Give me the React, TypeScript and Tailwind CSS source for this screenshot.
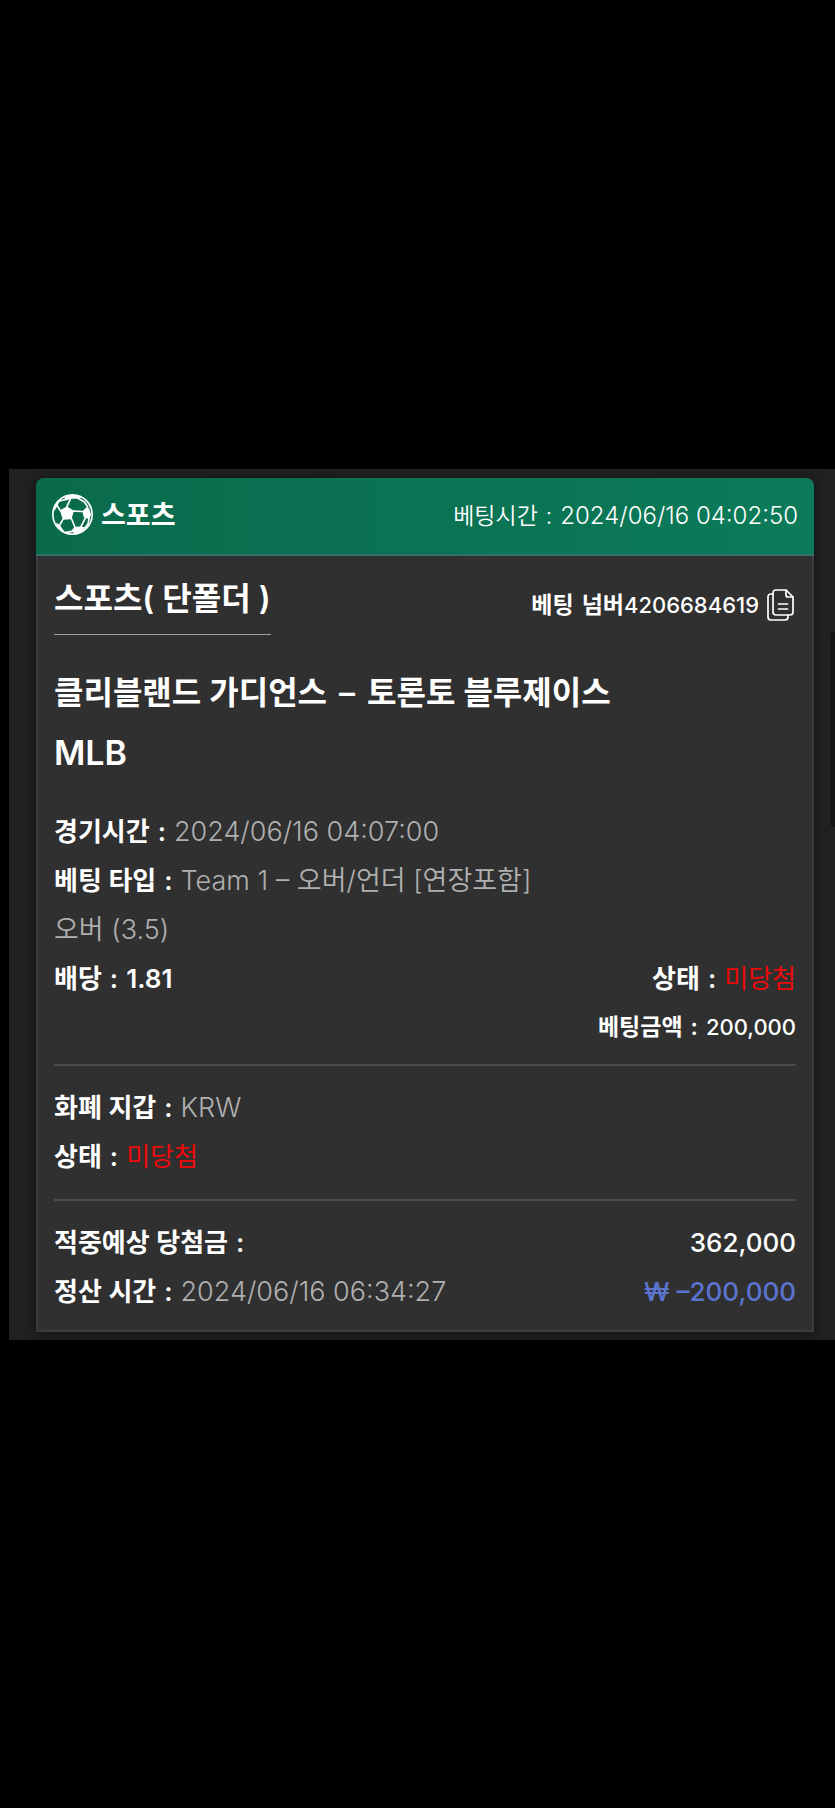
import React from "react";

const SoccerBall = () => (
  <svg viewBox="0 0 124 124" className="mb-1 w-[41px] h-[41px] shrink-0" fill="none" aria-hidden="true">
    <circle cx="62" cy="62" r="59.5" stroke="#fff" strokeWidth="5" />
    <g fill="#fff">
      <path d="M24 50 L45 37 L66 51 L59 76 L33 78 Z" />
      <path d="M36 9 Q62 -3 89 10 L80 14 L57 14 L42 20 Z" />
      <path d="M92 52 L107 38 L114 48 L118 62 L113 76 L96 70 Z" />
      <path d="M68 99 L88 98 L101 101 Q90 117 72 121 L58 113 Z" />
      <path d="M14 88 L24 94 L36 112 L40 119 Q20 108 12 90 Z" />
      <path d="M3 56 L8 38 L15 28 L18 32 L12 44 Z" />
    </g>
    <g stroke="#fff" strokeWidth="5" strokeLinecap="round" strokeLinejoin="round">
      <path d="M45 38 L56 14" />
      <path d="M65 52 L93 53" />
      <path d="M59 75 L69 99" />
      <path d="M33 77 L24 93" />
      <path d="M25 50 L14 32 L22 21 L40 17" />
      <path d="M79 13 L98 24 L108 39" />
      <path d="M88 98 L101 72" />
      <path d="M40 117 L60 113" />
      <path d="M112 75 L109 90 L100 102" />
    </g>
  </svg>
);

const CopyIcon = () => (
  <svg
    viewBox="0 0 27 32"
    className="w-[27px] h-8"
    fill="none"
    stroke="#fff"
    strokeWidth="1.7"
    strokeLinejoin="round"
    strokeLinecap="round"
    aria-hidden="true"
  >
    <path d="M9 1 H19 L26 8 V23 Q26 26 23 26 H9 Q6 26 6 23 V4 Q6 1 9 1 Z" />
    <path d="M19 1 V6 Q19 8 21 8 H26" />
    <path d="M6 5 H4 Q1 5 1 8 V28 Q1 31 4 31 H18 Q21 31 21 28 V26" />
    <path d="M11.5 15 H20.5 M11.5 20 H20.5" />
  </svg>
);

const Row = ({ label, children }: { label: string; children?: React.ReactNode }) => (
  <p className="flex items-baseline gap-2 text-[26px] font-semibold text-white">
    <span>{label}</span>
    <span>:</span>
    {children}
  </p>
);

const Value = ({ children }: { children: React.ReactNode }) => (
  <span className="text-[27px] font-[350] text-[#b0b0b0]">{children}</span>
);

const Lost = () => <span className="font-normal text-[#ec0a0a]">미당첨</span>;

export default function App() {
  return (
    <div className="min-h-screen bg-black pt-[469px] pl-[9px] font-['Inter','Noto_Sans_CJK_KR',sans-serif]">
      <main className="relative bg-[#212121] pt-[9px] pb-2 pl-[27px] pr-[21px]">
        <article className="rounded-t-lg shadow-[0_2px_12px_rgba(0,0,0,0.5)]">
          <header className="flex h-[78px] items-center justify-between rounded-t-lg border-b-2 border-[#35706a] bg-linear-to-r from-[#0a6a4c] to-[#0b7b59] px-4">
            <div className="flex items-center gap-2">
              <SoccerBall />
              <span className="text-[27px] font-semibold text-white">스포츠</span>
            </div>
            <p className="flex items-baseline gap-2 text-[23px] font-[350] text-white">
              <span>베팅시간</span>
              <span>:</span>
              <time className="text-[24px]">2024/06/16 04:02:50</time>
            </p>
          </header>

          <div className="border-2 border-t-0 border-[#3c3c40] bg-[#303030] px-4 pb-[14px]">
            <div className="flex items-start justify-between">
              <h1 className="mt-2 flex h-[71px] items-center border-b border-[#a0a0a0] text-[32px] font-semibold text-white">
                스포츠( 단폴더 )
              </h1>
              <div className="mt-8 flex items-center gap-2 pr-0.5 text-[23px] font-semibold text-white">
                <p className="flex items-baseline">
                  <span className="mr-2">베팅</span>
                  <span>넘버</span>
                  <span className="text-[22px] font-medium">4206684619</span>
                </p>
                <button type="button" aria-label="복사">
                  <CopyIcon />
                </button>
              </div>
            </div>

            {/* Match */}
            <h2 className="mt-7 flex gap-3 text-[32px] leading-[60px] font-semibold text-white">
              <span>클리블랜드 가디언스</span>
              <span>–</span>
              <span>토론토 블루제이스</span>
            </h2>
            <p className="text-[34px] leading-[60px] font-semibold text-white">MLB</p>

            {/* Bet details */}
            <div className="mt-6 leading-[49px]">
              <Row label="경기시간"><Value>2024/06/16 04:07:00</Value></Row>
              <Row label="베팅 타입"><Value>Team 1 – 오버/언더 [연장포함]</Value></Row>
              <p className="flex"><Value>오버 (3.5)</Value></p>
              <div className="flex justify-between">
                <Row label="배당">1.81</Row>
                <Row label="상태"><Lost /></Row>
              </div>
              <p className="flex items-baseline justify-end gap-2 text-[23px] font-semibold text-white">
                <span>베팅금액</span>
                <span>:</span>
                <span className="text-[22px] font-medium">200,000</span>
              </p>
            </div>

            <hr className="mt-3 border-t-2 border-[#4b4b4b]" />

            {/* Wallet */}
            <div className="mt-[17px] leading-[49px]">
              <Row label="화폐 지갑"><Value>KRW</Value></Row>
              <Row label="상태"><Lost /></Row>
            </div>

            <hr className="mt-[18px] border-t-2 border-[#4b4b4b]" />

            {/* Settlement */}
            <div className="mt-[17px] leading-[49px]">
              <div className="flex items-baseline justify-between">
                <Row label="적중예상 당첨금" />
                <span className="text-[26px] font-medium text-white">362,000</span>
              </div>
              <div className="flex items-baseline justify-between">
                <Row label="정산 시간"><Value>2024/06/16 06:34:27</Value></Row>
                <span className="text-[26px] font-medium text-[#5a74d0]">₩ –200,000</span>
              </div>
            </div>
          </div>
        </article>

        {/* Scroll thumb */}
        <div className="absolute top-[163px] right-0 h-[195px] w-[5px] rounded-l bg-[#161616]" />
      </main>
    </div>
  );
}
